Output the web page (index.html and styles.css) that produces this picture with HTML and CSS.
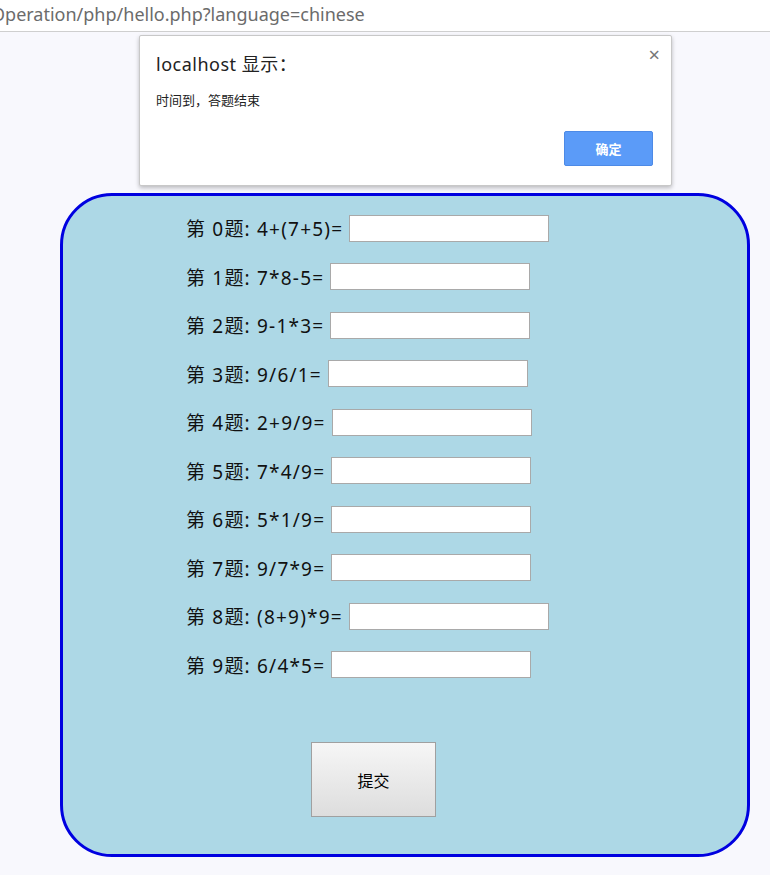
FILE: index.html
```html
<!DOCTYPE html>
<html lang="zh-CN">
<head>
  <meta charset="UTF-8">
  <title>答题</title>
  <link rel="stylesheet" href="styles.css">
</head>
<body>
  <div class="address"><span>Operation/php/hello.php?language=chinese</span></div>
  <div class="page">
    <form class="quiz" onsubmit="return false">
      <div class="row">第 0题: 4+(7+5)= <input type="text"></div>
      <div class="row">第 1题: 7*8-5= <input type="text"></div>
      <div class="row">第 2题: 9-1*3= <input type="text"></div>
      <div class="row">第 3题: 9/6/1= <input type="text"></div>
      <div class="row">第 4题: 2+9/9= <input type="text"></div>
      <div class="row">第 5题: 7*4/9= <input type="text"></div>
      <div class="row">第 6题: 5*1/9= <input type="text"></div>
      <div class="row">第 7题: 9/7*9= <input type="text"></div>
      <div class="row">第 8题: (8+9)*9= <input type="text"></div>
      <div class="row">第 9题: 6/4*5= <input type="text"></div>
      <button class="submit" type="submit">提交</button>
    </form>

    <div class="dialog">
      <span class="close">&times;</span>
      <div class="dialog-title">localhost 显示：</div>
      <div class="dialog-msg">时间到，答题结束</div>
      <div class="dialog-actions">
        <button class="ok">确定</button>
      </div>
    </div>
  </div>
</body>
</html>
```

FILE: styles.css
```css
body {
  margin: 0;
  background: #f8f8fd;
  font-family: "Noto Sans", "Noto Sans CJK SC", sans-serif;
}
.address {
  height: 31px;
  line-height: 29px;
  background: #fff;
  color: #6b6b6b;
  font-size: 18px;
  white-space: nowrap;
  overflow: hidden;
  border-bottom: 1px solid #cfcfcf;
}
.address span {
  margin-left: -9px;
}
.page {
  position: relative;
  padding: 161px 0 20px 60px;
}
.quiz {
  width: 684px;
  height: 658px;
  box-sizing: content-box;
  background: #add8e6;
  border: 3px solid #0000e0;
  border-radius: 52px;
}
.row {
  height: 48.5px;
  display: flex;
  align-items: center;
  padding-left: 123px;
  font-size: 19px;
  letter-spacing: 1.2px;
  color: #111;
  white-space: pre;
}
.quiz .row:first-child {
  margin-top: 8px;
}
.row input {
  width: 200px;
  height: 27px;
  box-sizing: border-box;
  border: 1px solid #a9a9a9;
  background: #fff;
  margin: 0;
  padding: 1px 2px;
}
.submit {
  display: block;
  margin: 53px 0 0 248px;
  width: 125px;
  height: 75px;
  border: 1px solid #a0a0a0;
  background: linear-gradient(#f6f6f6, #dddddd);
  font-family: "Noto Sans CJK SC", sans-serif;
  font-size: 16px;
  color: #000;
}
.dialog {
  position: absolute;
  left: 139px;
  top: 3px;
  width: 533px;
  height: 151px;
  box-sizing: border-box;
  background: #fff;
  border: 1px solid #c8c8c8;
  border-radius: 2px;
  box-shadow: 0 2px 4px rgba(0,0,0,0.25);
  padding: 16px 18px 0 16px;
  color: #222;
}
.close {
  position: absolute;
  right: 11px;
  top: 5px;
  font-size: 20px;
  color: #777;
}
.dialog-title {
  font-size: 18px;
  line-height: 24px;
  letter-spacing: 0.5px;
}
.dialog-msg {
  font-size: 13px;
  margin-top: 15px;
  line-height: 18px;
  font-family: "Noto Sans CJK SC", sans-serif;
}
.dialog-actions {
  display: flex;
  justify-content: flex-end;
  margin-top: 22px;
}
.ok {
  width: 89px;
  height: 35px;
  background: #5b9bf8;
  border: 1px solid #4d8ae6;
  border-radius: 2px;
  color: #fff;
  font-weight: bold;
  font-size: 13px;
  font-family: "Noto Sans CJK SC", sans-serif;
}
```
